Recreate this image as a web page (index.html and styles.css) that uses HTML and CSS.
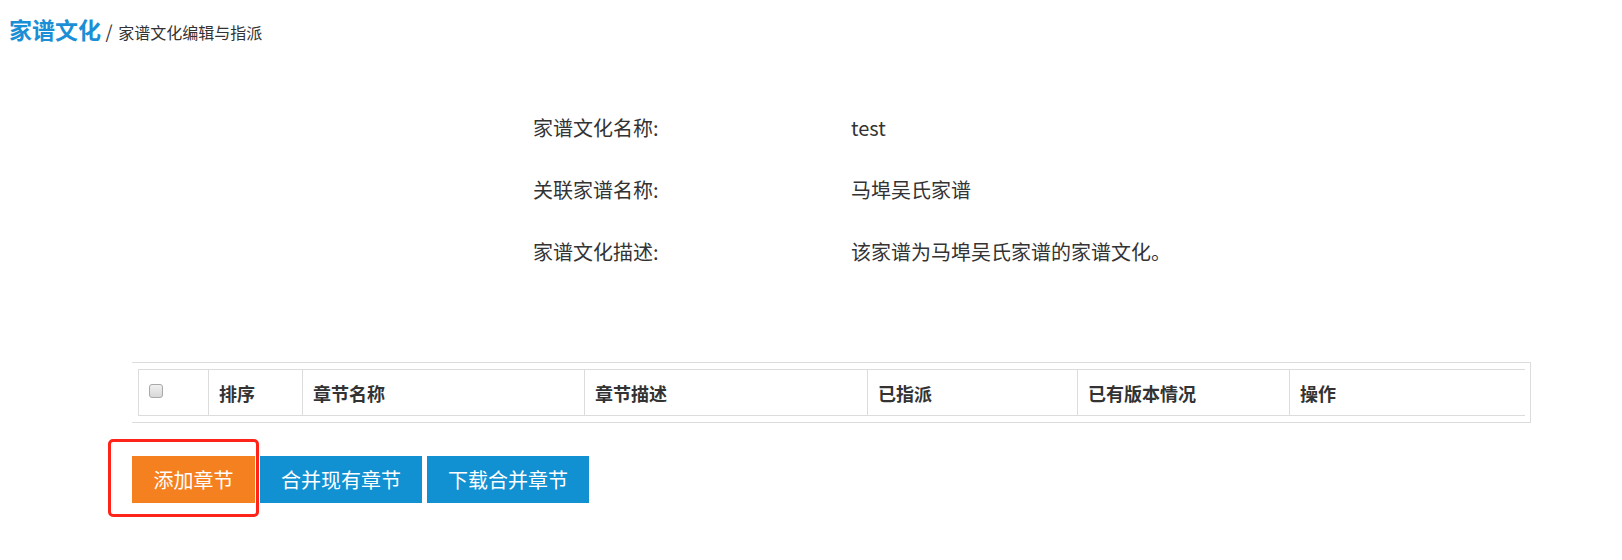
FILE: index.html
```html
<!DOCTYPE html>
<html lang="zh-CN">
<head>
  <meta charset="UTF-8" />
  <meta name="viewport" content="width=device-width, initial-scale=1.0"/>
  <title>家谱文化编辑与指派</title>
  <link rel="stylesheet" href="styles.css">
</head>
<body>

  <div class="crumb">
    <span class="crumb-title">家谱文化</span>
    <span class="crumb-sep">/</span>
    <span class="crumb-sub">家谱文化编辑与指派</span>
  </div>

  <div class="info">
    <div class="info-row">
      <span class="info-label">家谱文化名称:</span>
      <span class="info-value">test</span>
    </div>
    <div class="info-row">
      <span class="info-label">关联家谱名称:</span>
      <span class="info-value">马埠吴氏家谱</span>
    </div>
    <div class="info-row">
      <span class="info-label">家谱文化描述:</span>
      <span class="info-value">该家谱为马埠吴氏家谱的家谱文化。</span>
    </div>
  </div>

  <div class="box">
    <table class="chapters">
      <colgroup>
        <col class="c-check">
        <col class="c-order">
        <col class="c-name">
        <col class="c-desc">
        <col class="c-assign">
        <col class="c-version">
        <col class="c-op">
      </colgroup>
      <thead>
        <tr>
          <th><input type="checkbox" class="check-all"></th>
          <th>排序</th>
          <th>章节名称</th>
          <th>章节描述</th>
          <th>已指派</th>
          <th>已有版本情况</th>
          <th>操作</th>
        </tr>
      </thead>
      <tbody>
        <!-- 章节数据 -->
      </tbody>
    </table>
  </div>

  <div class="actions">
    <button class="btn btn-orange">添加章节</button>
    <button class="btn btn-blue">合并现有章节</button>
    <button class="btn btn-blue">下载合并章节</button>
    <span class="highlight"></span>
  </div>

</body>
</html>
```

FILE: styles.css
```css
body {
  margin: 0;
  min-height: 560px;
  font-family: "Noto Sans CJK SC", "Noto Sans", sans-serif;
  color: #333;
  background: #fff;
}

.crumb {
  padding: 14px 0 0 9px;
  line-height: 30px;
  height: 30px;
}
.crumb-title {
  font-size: 23px;
  font-weight: bold;
  color: #1a8fd6;
}
.crumb-sep {
  font-size: 18px;
  color: #333;
  margin: 0 2px 0 1px;
}
.crumb-sub {
  font-size: 16px;
  color: #333;
}

.info {
  margin: 53px 0 0 533px;
}
.info-row {
  display: flex;
  height: 62px;
  line-height: 62px;
  font-size: 20px;
  color: #333;
}
.info-label {
  width: 318px;
}

.box {
  margin: 79px 0 0 132px;
  width: 1386px;
  padding: 6px;
  border: 1px solid #dcdcdc;
  border-left: none;
}
.chapters {
  width: 1386px;
  table-layout: fixed;
  border-collapse: collapse;
}
.c-check { width: 70px; }
.c-order { width: 94px; }
.c-name { width: 282px; }
.c-desc { width: 283px; }
.c-assign { width: 210px; }
.c-version { width: 212px; }
.c-op { width: 235px; }

.chapters th {
  height: 45px;
  padding: 0 10px;
  text-align: left;
  font-size: 18px;
  font-weight: bold;
  color: #333;
  border-top: 1px solid #dcdcdc;
  border-bottom: 1px solid #dcdcdc;
  border-left: 1px solid #dcdcdc;
}
.check-all {
  -webkit-appearance: none;
  appearance: none;
  display: block;
  width: 14px;
  height: 14px;
  margin: -3px 0 0 0;
  border: 1px solid #a9a9a9;
  border-radius: 3px;
  background: linear-gradient(#f0f0f0, #d8d8d8);
}

.actions {
  position: relative;
  display: flex;
  gap: 5px;
  margin: 33px 0 0 132px;
  padding-bottom: 30px;
}
.btn {
  height: 47px;
  padding: 0 21.5px;
  border: none;
  font-family: "Noto Sans CJK SC", "Noto Sans", sans-serif;
  font-size: 20px;
  color: #fff;
  cursor: pointer;
}
.btn-orange {
  background-color: #f5801f;
}
.btn-blue {
  padding: 0 21px;
  background-color: #1190d2;
}
.highlight {
  position: absolute;
  left: -24px;
  top: -17px;
  width: 151px;
  height: 78px;
  box-sizing: border-box;
  border: 3px solid #ff2419;
  border-radius: 5px;
  pointer-events: none;
}
```
